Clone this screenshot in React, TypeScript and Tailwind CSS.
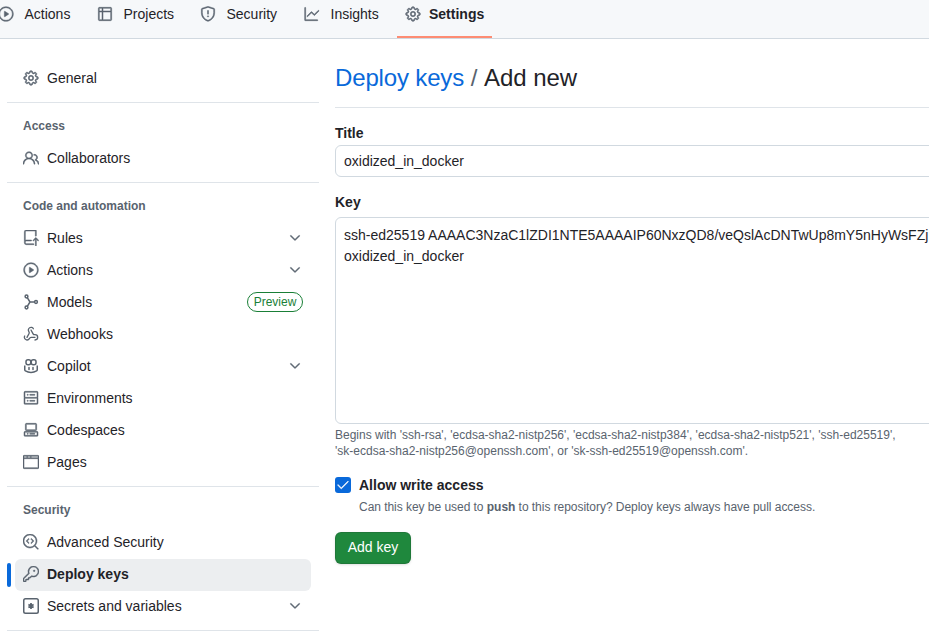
import type { ReactNode } from "react";
import { Webhook } from "lucide-react";
import {
  GoBrowser,
  GoCheck,
  GoChevronDown,
  GoCodescan,
  GoCodespaces,
  GoGear,
  GoGraph,
  GoKey,
  GoPeople,
  GoPlay,
  GoRepoPush,
  GoServer,
  GoShield,
  GoTable,
} from "react-icons/go";

// the go set is drawn on a 24 grid, so thicken it a bit for 16px
const ic = { size: 16, strokeWidth: 0.75 };

function ModelsIcon() {
  return (
    <svg width="16" height="16" viewBox="0 0 16 16" fill="none" stroke="currentColor" strokeWidth="1.5">
      <circle cx="3.5" cy="2.5" r="1.4" />
      <circle cx="3.5" cy="13.5" r="1.4" />
      <circle cx="13" cy="8" r="1.4" />
      <path d="M4.3 3.7 7 8l-2.7 4.3M7 8h4.6" />
    </svg>
  );
}

function CopilotIcon() {
  return (
    <svg width="16" height="16" viewBox="0 0 16 16" fill="none" stroke="currentColor" strokeWidth="1.5">
      <rect x="3" y="1.75" width="4.75" height="5" rx="2" />
      <rect x="8.25" y="1.75" width="4.75" height="5" rx="2" />
      <path d="M1.75 7.5v4.2c0 .5.3.9.7 1.2 1.4.9 3.5 1.6 5.55 1.6s4.15-.7 5.55-1.6c.4-.3.7-.7.7-1.2V7.5" />
      <path d="M6 9.5v2M10 9.5v2" strokeLinecap="round" />
    </svg>
  );
}

function SecretIcon() {
  return (
    <svg width="16" height="16" viewBox="0 0 16 16" fill="none" stroke="currentColor">
      <rect x="0.75" y="0.75" width="14.5" height="14.5" rx="1.75" strokeWidth="1.5" />
      <path d="M8 5v6M5.4 6.5l5.2 3M10.6 6.5l-5.2 3" strokeWidth="1.75" />
    </svg>
  );
}

function NavTab({ icon, label, active, className }: { icon: ReactNode; label: string; active?: boolean; className?: string }) {
  return (
    <div
      className={`flex h-[38px] items-center ${active ? "border-b-2 border-[#fd8c73] px-[8px] pb-[8px] font-bold" : "pb-[10px]"} ${className ?? ""}`}
    >
      <span className={active ? "mr-[8px] text-[#59636e]" : "mr-[10.5px] text-[#59636e]"}>{icon}</span>
      <span>{label}</span>
    </div>
  );
}

function SideItem({
  icon,
  label,
  chevron,
  badge,
  active,
}: {
  icon: ReactNode;
  label: string;
  chevron?: boolean;
  badge?: boolean;
  active?: boolean;
}) {
  return (
    <div
      className={`relative mx-[8px] flex h-[32px] items-center rounded-[6px] px-[8px] ${
        active ? "-mb-[1px] mt-[1px] bg-[#eceef0] pb-[2px] font-bold" : ""
      }`}
    >
      {active && <span className="absolute left-[-8px] top-[4px] h-[24px] w-[4px] rounded-[6px] bg-[#0969da]" />}
      <span className="mr-[8px] flex w-[16px] text-[#59636e]">{icon}</span>
      <span className="flex-1">{label}</span>
      {chevron && <GoChevronDown {...ic} className="text-[#59636e]" />}
      {badge && (
        <span className="flex h-[20px] w-[56px] items-center justify-center rounded-full border border-[#1a7f37] text-[12px] text-[#1a7f37]">
          Preview
        </span>
      )}
    </div>
  );
}

function SideGroup({ heading, children }: { heading?: string; children: ReactNode }) {
  return (
    <div className="border-b border-[#d1d9e0b3] pb-[8px] pt-[7px]">
      {heading && <div className="ml-[16px] flex h-[32px] items-center text-[12px] font-bold text-[#59636e]">{heading}</div>}
      {children}
    </div>
  );
}

export default function App() {
  return (
    <div className="h-[633px] w-[929px] overflow-hidden bg-white font-['Liberation_Sans',Arial,sans-serif] text-[14px] text-[#1f2328]">
      <div className="flex h-[39px] items-start border-b border-[#d1d9e0] bg-[#f6f8fa]">
        <NavTab icon={<GoPlay {...ic} />} label="Actions" className="-ml-[2px] w-[99px]" />
        <NavTab icon={<GoTable {...ic} />} label="Projects" className="w-[103px]" />
        <NavTab icon={<GoShield {...ic} />} label="Security" className="w-[104px]" />
        <NavTab icon={<GoGraph {...ic} />} label="Insights" className="w-[93px]" />
        <NavTab icon={<GoGear {...ic} />} label="Settings" active />
      </div>

      <div className="flex">
        <div className="ml-[7px] w-[312px] shrink-0">
          <div className="border-b border-[#d1d9e0b3] pb-[8px] pt-[23px]">
            <SideItem icon={<GoGear {...ic} />} label="General" />
          </div>
          <SideGroup heading="Access">
            <SideItem icon={<GoPeople {...ic} />} label="Collaborators" />
          </SideGroup>
          <SideGroup heading="Code and automation">
            <SideItem icon={<GoRepoPush {...ic} />} label="Rules" chevron />
            <SideItem icon={<GoPlay {...ic} />} label="Actions" chevron />
            <SideItem icon={<ModelsIcon />} label="Models" badge />
            <SideItem icon={<Webhook size={16} strokeWidth={2} />} label="Webhooks" />
            <SideItem icon={<CopilotIcon />} label="Copilot" chevron />
            <SideItem icon={<GoServer {...ic} />} label="Environments" />
            <SideItem icon={<GoCodespaces {...ic} />} label="Codespaces" />
            <SideItem icon={<GoBrowser {...ic} />} label="Pages" />
          </SideGroup>
          <SideGroup heading="Security">
            <SideItem icon={<GoCodescan {...ic} />} label="Advanced Security" />
            <SideItem icon={<GoKey {...ic} />} label="Deploy keys" active />
            <SideItem icon={<SecretIcon />} label="Secrets and variables" chevron />
          </SideGroup>
        </div>

        <div className="ml-[16px] w-[800px] shrink-0">
          <h1 className="mt-[23px] h-[46px] border-b border-[#d1d9e0b3] text-[24px] leading-[32px]">
            <span className="tracking-[-0.15px] text-[#0969da]">Deploy keys</span> <span className="text-[#59636e]">/</span>{" "}
            <span className="tracking-[-0.05px]">Add new</span>
          </h1>

          <label className="mt-[15px] block h-[20px] font-bold leading-[20px]">Title</label>
          <input
            readOnly
            value="oxidized_in_docker"
            className="mt-[2px] block h-[32px] w-full rounded-[6px] border border-[#d1d9e0] px-[8px] text-[14px] text-[#1f2328] outline-none"
          />

          <label className="mt-[15px] block h-[20px] font-bold leading-[20px]">Key</label>
          <textarea
            readOnly
            wrap="off"
            value={"ssh-ed25519 AAAAC3NzaC1lZDI1NTE5AAAAIP60NxzQD8/veQslAcDNTwUp8mY5nHyWsFZj\noxidized_in_docker"}
            className="mt-[5px] block h-[207px] w-full resize-none overflow-hidden rounded-[6px] border border-[#d1d9e0] px-[8px] py-[7px] text-[14px] leading-[21px] text-[#1f2328] outline-none"
          />
          <p className="mt-[3px] w-[580px] text-[12px] leading-[16px] text-[#59636e]">
            Begins with 'ssh-rsa', 'ecdsa-sha2-nistp256', 'ecdsa-sha2-nistp384', 'ecdsa-sha2-nistp521', 'ssh-ed25519',
            'sk-ecdsa-sha2-nistp256@openssh.com', or 'sk-ssh-ed25519@openssh.com'.
          </p>

          <div className="mt-[17px] flex">
            <span className="mt-[1px] flex h-[16px] w-[16px] items-center justify-center rounded-[3px] bg-[#0969da] text-white">
              <GoCheck size={14} strokeWidth={0.75} />
            </span>
            <div className="ml-[8px]">
              <div className="font-bold leading-[18px]">Allow write access</div>
              <div className="mt-[5px] text-[12px] leading-[16px] tracking-[-0.04px] text-[#59636e]">
                Can this key be used to <b>push</b> to this repository? Deploy keys always have pull access.
              </div>
            </div>
          </div>

          <button className="mt-[17px] h-[32px] w-[76px] rounded-[6px] border border-[#1f232826] bg-[#1f883d] pb-[2px] text-[14px] font-normal text-white shadow-sm">
            Add key
          </button>
        </div>
      </div>
    </div>
  );
}
